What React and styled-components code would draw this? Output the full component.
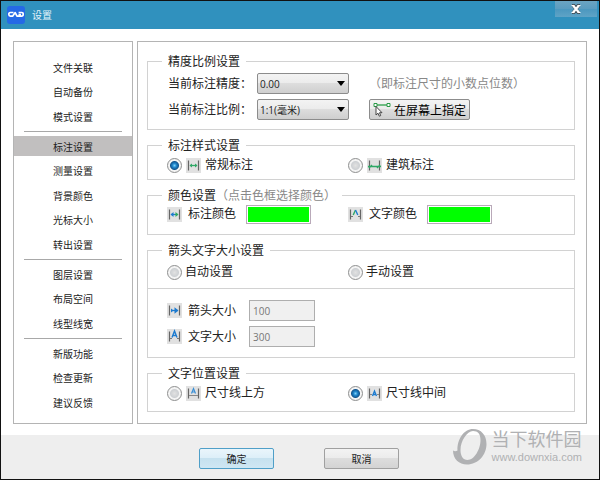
import { useState } from 'react';
import styled, { createGlobalStyle } from 'styled-components';

const GlobalStyle = createGlobalStyle`
  * {
    box-sizing: border-box;
  }

  body {
    margin: 0;
    font-family: "Open Sans", "Noto Sans CJK SC", sans-serif;
    font-size: 12px;
    line-height: 16px;
    color: #222;
  }

  button, input, select {
    font-family: inherit;
    color: inherit;
    margin: 0;
  }
`;

const Window = styled.div`
  position: relative;
  display: flex;
  flex-direction: column;
  min-height: 100vh;
  border: 1px solid #111;
  background: #fff;
`;

const TitleBar = styled.header`
  display: flex;
  align-items: center;
  height: 28px;
  padding-left: 6px;
  background: #3091be;
`;

const Title = styled.h1`
  flex: 1;
  margin: 0 0 0 7px;
  font-size: 10px;
  font-weight: normal;
  color: #e4f3fa;
`;

const CloseButton = styled.button`
  display: flex;
  align-items: center;
  justify-content: center;
  align-self: flex-start;
  width: 42px;
  height: 16px;
  margin-right: 2px;
  padding: 0;
  border: 0;
  background: linear-gradient(#6ba4c2, #5a9cc0 50%, #4b97bf 50%, #5fa3c6);
`;

const Body = styled.div`
  display: flex;
  flex: 1;
  gap: 4px;
  padding: 12px 12px 11px;
`;

const Sidebar = styled.nav`
  display: flex;
  width: 120px;
  padding: 15px 0 11px;
  border: 1px solid #b4b4b4;
`;

const Menu = styled.ul`
  display: flex;
  flex: 1;
  flex-direction: column;
  justify-content: space-between;
  margin: 0;
  padding: 0;
  list-style: none;
`;

const MenuButton = styled.button`
  display: block;
  width: 100%;
  height: 20px;
  padding: 0;
  border: 0;
  background: ${props => props.$active ? '#c1bfbf' : 'transparent'};
  font-size: 10px;
  text-align: center;
`;

const Separator = styled.li`
  height: 1px;
  margin: 0 10px;
  background: #a8a8a8;
`;

const Panel = styled.main`
  display: flex;
  flex: 1;
  flex-direction: column;
  gap: 6px;
  padding: 10px 11px 10px 9px;
  border: 1px solid #b4b4b4;
`;

const Group = styled.fieldset`
  min-width: 0;
  margin: 0;
  padding: ${props => props.$top || 0}px 0 ${props => props.$bottom || 0}px;
  border: 1px solid #d2d2d2;
`;

const Legend = styled.legend`
  margin-left: 14px;
  padding: 2px 6px 0;
  line-height: 16px;
`;

const Hint = styled.span`
  color: #888;
`;

const PrecisionGrid = styled.div`
  display: grid;
  grid-template-columns: auto auto 1fr;
  align-items: center;
  justify-items: start;
  gap: 5px 0;
  padding-left: 20px;
`;

const SelectBox = styled.div`
  position: relative;
  width: 92px;
  margin: 0 20px 0 5px;

  &::after {
    content: "";
    position: absolute;
    top: 8px;
    right: 4px;
    border: 4px solid transparent;
    border-top: 5px solid #000;
    border-bottom: 0;
    pointer-events: none;
  }
`;

const Select = styled.select`
  display: block;
  width: 100%;
  height: 21px;
  padding: 0 2px;
  appearance: none;
  border: 1px solid #8c8c8c;
  border-radius: 2px;
  background: linear-gradient(#f3f3f3, #ebebeb 50%, #dddddd 50%, #cfcfcf);
  font-size: 10px;
`;

const PickButton = styled.button`
  display: flex;
  align-items: center;
  gap: 3px;
  height: 21px;
  padding: 0 3px;
  border: 1px solid #8c8c8c;
  border-radius: 2px;
  background: linear-gradient(#f3f3f3, #ebebeb 50%, #dddddd 50%, #cfcfcf);
  font-size: 12px;
  color: #000;
`;

const Columns = styled.div`
  display: grid;
  grid-template-columns: 4fr 5fr;
  padding-left: 19px;
`;

const Option = styled.label`
  display: flex;
  align-items: center;
  gap: ${props => props.$tight ? 3 : 4}px;
  height: 16px;
`;

const Radio = styled.input`
  width: 15px;
  height: 15px;
  appearance: none;
  border: 1px solid #8e8f8f;
  border-radius: 50%;
  background: ${props => props.checked
    ? 'radial-gradient(circle, #7fd0f7 0, #1f86cc 2px, #14568f 4px, #f4f4f4 5px)'
    : 'radial-gradient(circle, #e2e2e2 0, #cdd0d3 4px, #f4f4f4 5px)'};
`;

const Field = styled.div`
  display: flex;
  align-items: center;
  gap: 6px;
  height: ${props => props.$height}px;
`;

const Swatch = styled.button`
  width: 65px;
  height: 19px;
  margin-left: 4px;
  padding: 1px;
  border: 1px solid #b9a9b9;
  background: #0f0 content-box;
`;

const SizeFields = styled.div`
  display: flex;
  flex-direction: column;
  gap: 5px;
  margin-top: 8px;
  padding: 11px 0 0 19px;
  border-top: 1px solid #d2d2d2;
`;

const SizeInput = styled.input`
  width: 66px;
  height: 21px;
  margin-left: 7px;
  padding: 0 3px;
  border: 1px solid #aeaeae;
  border-radius: 0;
  background: #f0f0f0;
  font-size: 10px;

  &:disabled {
    color: #777;
  }
`;

const Footer = styled.footer`
  display: flex;
  justify-content: center;
  gap: 50px;
  height: 44px;
  padding: 13px 2px 0 0;
  background: #eee;
`;

const FooterButton = styled.button`
  width: 75px;
  height: 21px;
  padding: 0;
  border: 1px solid ${props => props.$primary ? '#4f9fc8' : '#a0a0a0'};
  border-radius: 2px;
  background: ${props => props.$primary
    ? 'linear-gradient(#eaf5fb, #dceef8 50%, #c6e1ef 50%, #cfe7f3)'
    : 'linear-gradient(#f3f3f3, #ebebeb 50%, #dddddd 50%, #d3d3d3)'};
  font-size: 10px;
`;

const Watermark = styled.div`
  position: absolute;
  right: 17px;
  bottom: 14px;
  display: flex;
  gap: 5px;
  color: #b0b1b3;
  pointer-events: none;
`;

const WatermarkName = styled.div`
  font-size: 18px;
  line-height: 20px;
`;

const WatermarkUrl = styled.div`
  font-family: "Liberation Sans", sans-serif;
  font-size: 11px;
  line-height: 16px;
`;

const Logo = () => (
  <svg width="18" height="18" viewBox="0 0 18 18" aria-hidden="true">
    <rect width="18" height="18" rx="3" fill="#2569e6" />
    <path
      d="M6.5 6.5H3.4Q1.8 6.5 1.8 8.3T3.4 10.2H5.6L8.2 6.6L10 10.2H14.6Q16.2 10.2 16.2 8.3T14.6 6.5H11.6M11.5 8.5H14"
      fill="none"
      stroke="#fff"
      strokeWidth="1.7"
      strokeLinejoin="round"
    />
  </svg>
);

const CloseIcon = () => (
  <svg width="12" height="10" viewBox="0 0 12 10" aria-hidden="true">
    <path d="M2 1.5H4L6 3.500L8 1.500H10M2 8.500H4L6 6.500L8 8.500H10M3 1.500L9 8.500M9 1.500L3 8.500" fill="none" stroke="#44525c" strokeWidth="3" />
    <path d="M3 1.5L9 8.5M9 1.5L3 8.5" stroke="#fff" strokeWidth="2.2" />
    <path d="M1.5 1.500H4.500M7.500 1.500H10.500M1.500 8.500H4.500M7.500 8.500H10.500" stroke="#fff" />
  </svg>
);

const PickIcon = () => (
  <svg width="18" height="15" viewBox="0 0 18 15" aria-hidden="true">
    <path d="M3 3H15" stroke="#3aa655" strokeWidth="1.4" />
    <path d="M1 1.5h3v3h-3zM14 1.5h3v3h-3z" fill="#fff" stroke="#2a9a47" />
    <path d="M3 4.5V13L5 11.200L6.300 14.200L7.700 13.600L6.500 10.700H9Z" fill="#fff" stroke="#444" />
  </svg>
);

const marks = {
  normal: (
    <>
      <path d="M4 7.5H11" stroke="#2fa866" strokeWidth="1.3" />
      <path d="M3.5 7.5l2.500-2v4zM11.500 7.500l-2.500-2v4z" fill="#2fa866" />
    </>
  ),
  building: (
    <path d="M1 8.500H14M2 10L5 7M10 10L13 7" stroke="#2fa866" strokeWidth="1.3" />
  ),
  lineColor: (
    <>
      <path d="M4 7.500H8" stroke="#1c7bd0" strokeWidth="1.3" />
      <path d="M8 7.500H11" stroke="#2fa866" strokeWidth="1.3" />
      <path d="M3.500 7.500l3-2.400v4.800z" fill="#1c7bd0" />
      <path d="M11.500 7.500l-3-2.400v4.800z" fill="#2fa866" />
    </>
  ),
  textColor: (
    <>
      <path d="M5.200 8L7.500 3" stroke="#2fa866" strokeWidth="1.4" />
      <path d="M7.500 3L9.800 8" stroke="#1c7bd0" strokeWidth="1.4" />
      <path d="M3 9.500H5M10 9.500H12" stroke="#777" />
    </>
  ),
  arrow: (
    <>
      <path d="M4 7.500H11" stroke="#1c7bd0" strokeWidth="1.3" />
      <path d="M11.500 7.500L7.500 4.300v6.400zM6.500 7.500l-2.500-2v4z" fill="#1c7bd0" />
    </>
  ),
  text: (
    <>
      <path d="M5 8.500L7.500 2L10 8.500M6 6.500H9" stroke="#1c7bd0" strokeWidth="1.4" fill="none" />
      <path d="M3 9.500H5M10 9.500H12" stroke="#777" />
    </>
  ),
  above: (
    <>
      <path d="M5.500 7.500L7.500 2.500L9.500 7.500M6.300 6H8.700" stroke="#3a8fd6" strokeWidth="1.200" fill="none" />
      <path d="M3 9.500H12" stroke="#888" />
    </>
  ),
  middle: (
    <>
      <path d="M5.500 10L7.500 5L9.500 10M6.300 8.500H8.700" stroke="#1c7bd0" strokeWidth="1.300" fill="none" />
      <path d="M3 8.500H5M10 8.500H12" stroke="#888" />
    </>
  ),
};

const DimensionIcon = ({ kind }) => (
  <svg width="15" height="15" viewBox="0 0 15 15" aria-hidden="true">
    <rect width="15" height="15" fill="#e1e1e1" />
    <path d="M2.500 2.500V12.500M12.500 2.500V12.500" stroke="#666" strokeWidth="1.200" />
    {marks[kind]}
  </svg>
);

const WatermarkLogo = () => (
  <svg width="34" height="36" viewBox="0 0 34 36" aria-hidden="true">
    <path
      fillRule="evenodd"
      fill="#b0b1b3"
      d="M20 0C28 0 33.500 6 33.500 15C33.500 26 25 35.500 14 35.500C6 35.500 0 30 0 21.500C1.500 22.500 3 22.500 4.500 21.500C4 10 11 0 20 0ZM20 2C14 2 7.500 12 7.500 21C7.500 27 10 31 14.500 31C21.500 31 27.500 20 27.500 11C27.500 5 25 2 20 2Z"
    />
  </svg>
);

const RadioOption = ({ name, label, icon, checked, onChange }) => (
  <Option $tight={!icon}>
    <Radio type="radio" name={name} checked={checked} onChange={onChange} />
    {icon && <DimensionIcon kind={icon} />}
    {label}
  </Option>
);

const RadioPair = ({ name, options, initial }) => {
  const [selected, setSelected] = useState(initial);

  return (
    <Columns>
      {options.map(({ label, icon }, i) => (
        <RadioOption
          key={label}
          name={name}
          label={label}
          icon={icon}
          checked={selected === i}
          onChange={() => setSelected(i)}
        />
      ))}
    </Columns>
  );
};

const menuGroups = [
  ['文件关联', '自动备份', '模式设置'],
  ['标注设置', '测量设置', '背景颜色', '光标大小', '转出设置'],
  ['图层设置', '布局空间', '线型线宽'],
  ['新版功能', '检查更新', '建议反馈'],
];

const App = () => {
  const [page, setPage] = useState('标注设置');

  return (
    <>
      <GlobalStyle />
      <Window>
        <TitleBar>
          <Logo />
          <Title>设置</Title>
          <CloseButton aria-label="关闭">
            <CloseIcon />
          </CloseButton>
        </TitleBar>

        <Body>
          <Sidebar>
            <Menu>
              {menuGroups.map((items, i) => [
                i > 0 && <Separator key={`separator-${i}`} role="separator" />,
                ...items.map(item => (
                  <li key={item}>
                    <MenuButton $active={item === page} onClick={() => setPage(item)}>
                      {item}
                    </MenuButton>
                  </li>
                )),
              ])}
            </Menu>
          </Sidebar>

          <Panel>
            <Group $top={3} $bottom={9}>
              <Legend>精度比例设置</Legend>
              <PrecisionGrid>
                <label htmlFor="precision">当前标注精度：</label>
                <SelectBox>
                  <Select id="precision">
                    <option>0.00</option>
                  </Select>
                </SelectBox>
                <Hint>（即标注尺寸的小数点位数）</Hint>

                <label htmlFor="scale">当前标注比例：</label>
                <SelectBox>
                  <Select id="scale">
                    <option>1:1(毫米)</option>
                  </Select>
                </SelectBox>
                <PickButton>
                  <PickIcon />
                  在屏幕上指定
                </PickButton>
              </PrecisionGrid>
            </Group>

            <Group $top={3} $bottom={6}>
              <Legend>标注样式设置</Legend>
              <RadioPair
                name="style"
                initial={0}
                options={[
                  { label: '常规标注', icon: 'normal' },
                  { label: '建筑标注', icon: 'building' },
                ]}
              />
            </Group>

            <Group $bottom={10}>
              <Legend>颜色设置<Hint>（点击色框选择颜色）</Hint></Legend>
              <Columns>
                <Field $height={20}>
                  <DimensionIcon kind="lineColor" />
                  <label htmlFor="line-color">标注颜色</label>
                  <Swatch id="line-color" />
                </Field>
                <Field $height={20}>
                  <DimensionIcon kind="textColor" />
                  <label htmlFor="text-color">文字颜色</label>
                  <Swatch id="text-color" />
                </Field>
              </Columns>
            </Group>

            <Group $top={5} $bottom={10}>
              <Legend>箭头文字大小设置</Legend>
              <RadioPair
                name="size"
                initial={null}
                options={[{ label: '自动设置' }, { label: '手动设置' }]}
              />
              <SizeFields>
                <Field $height={21}>
                  <DimensionIcon kind="arrow" />
                  <label htmlFor="arrow-size">箭头大小</label>
                  <SizeInput id="arrow-size" defaultValue="100" disabled />
                </Field>
                <Field $height={21}>
                  <DimensionIcon kind="text" />
                  <label htmlFor="text-size">文字大小</label>
                  <SizeInput id="text-size" defaultValue="300" disabled />
                </Field>
              </SizeFields>
            </Group>

            <Group $top={3} $bottom={10}>
              <Legend>文字位置设置</Legend>
              <RadioPair
                name="position"
                initial={1}
                options={[
                  { label: '尺寸线上方', icon: 'above' },
                  { label: '尺寸线中间', icon: 'middle' },
                ]}
              />
            </Group>
          </Panel>
        </Body>

        <Footer>
          <FooterButton $primary>确定</FooterButton>
          <FooterButton>取消</FooterButton>
        </Footer>

        <Watermark>
          <WatermarkLogo />
          <div>
            <WatermarkName>当下软件园</WatermarkName>
            <WatermarkUrl>www.downxia.com</WatermarkUrl>
          </div>
        </Watermark>
      </Window>
    </>
  );
};

export default App;
